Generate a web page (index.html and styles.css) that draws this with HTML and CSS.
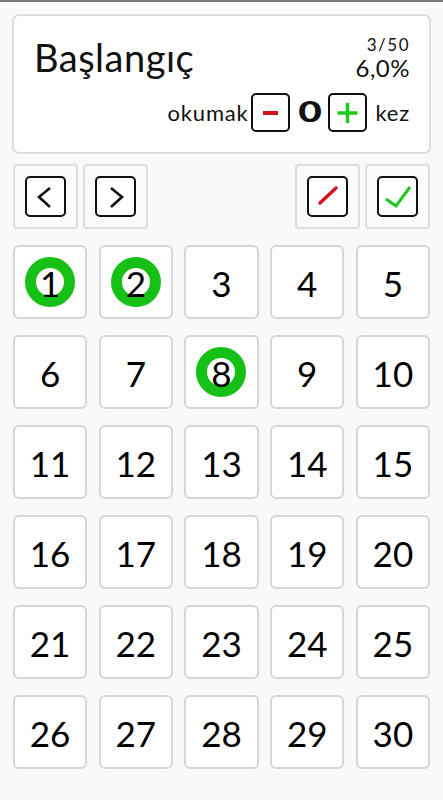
FILE: index.html
```html
<!DOCTYPE html>
<html>
<head>
    <meta charset="UTF-8">
    <meta name="viewport" content="width=device-width, initial-scale=1.0">
    <title>Başlangıç</title>
    <link rel="stylesheet" href="styles.css">
</head>
<body>
    <div class="page">
        <div class="header-card">
            <div class="header-top">
                <h1 class="title">Başlangıç</h1>
                <div class="stats">
                    <div class="stats-count">3/50</div>
                    <div class="stats-percent">6,0%</div>
                </div>
            </div>
            <div class="counter">
                <span class="counter-label">okumak</span>
                <button class="counter-btn minus">
                    <svg width="35" height="35" viewBox="0 0 35 35"><path d="M10 18h15" stroke="#d0141e" stroke-width="4"/></svg>
                </button>
                <span class="counter-value">0</span>
                <button class="counter-btn plus">
                    <svg width="35" height="35" viewBox="0 0 35 35"><path d="M7.5 18h20M17.5 8v20" stroke="#1ec81e" stroke-width="3.5"/></svg>
                </button>
                <span class="counter-label">kez</span>
            </div>
        </div>

        <div class="nav-row">
            <div class="nav-group">
                <div class="nav-cell">
                    <div class="nav-box">
                        <svg width="37" height="37" viewBox="0 0 37 37"><path d="M23 10l-11 9 11 10" fill="none" stroke="#111" stroke-width="2.6"/></svg>
                    </div>
                </div>
                <div class="nav-cell">
                    <div class="nav-box">
                        <svg width="37" height="37" viewBox="0 0 37 37"><path d="M14 10l11 9-11 10" fill="none" stroke="#111" stroke-width="2.6"/></svg>
                    </div>
                </div>
            </div>
            <div class="nav-group">
                <div class="nav-cell">
                    <div class="nav-box">
                        <svg width="37" height="37" viewBox="0 0 37 37"><path d="M11 25L27 10" fill="none" stroke="#d0141e" stroke-width="3.5" stroke-linecap="round"/></svg>
                    </div>
                </div>
                <div class="nav-cell">
                    <div class="nav-box">
                        <svg width="37" height="37" viewBox="0 0 37 37"><path d="M7 21l10 7L31 9" fill="none" stroke="#1ec81e" stroke-width="3"/></svg>
                    </div>
                </div>
            </div>
        </div>

        <div class="grid" id="grid"></div>
    </div>
    <script>
        const grid = document.getElementById("grid");
        const done = [1, 2, 8];

        for (let i = 1; i <= 30; i++) {
            const cell = document.createElement("div");
            cell.className = "cell";
            const num = document.createElement("span");
            num.className = done.includes(i) ? "num num-read" : "num";
            num.textContent = i;
            cell.appendChild(num);
            grid.appendChild(cell);
        }
    </script>
</body>
</html>
```

FILE: styles.css
```css
body {
    margin: 0;
    background-color: #f9f9f9;
    border-top: 2px solid #777;
    font-family: Lato, "DejaVu Sans", sans-serif;
    color: #111;
}

.page {
    padding: 12px 12px 0 12px;
}

.header-card {
    background: #fff;
    border: 2px solid #ddd;
    border-radius: 7px;
    height: 136px;
    padding: 0 19px 0 20px;
}

.header-top {
    display: flex;
    justify-content: space-between;
    align-items: flex-start;
    padding-top: 18px;
}

.title {
    margin: 0;
    font-size: 38px;
    font-weight: normal;
    line-height: 46px;
    letter-spacing: 0.5px;
}

.stats {
    text-align: right;
    padding-top: 2px;
}

.stats-count {
    font-size: 17px;
    line-height: 18px;
    letter-spacing: 1.5px;
}

.stats-percent {
    font-size: 24px;
    line-height: 24px;
    margin-top: 2px;
    letter-spacing: 0.5px;
}

.counter {
    display: flex;
    justify-content: flex-end;
    align-items: center;
    margin-top: 13px;
}

.counter-label {
    font-size: 22px;
    letter-spacing: 0.8px;
}

.counter-btn {
    width: 39px;
    height: 39px;
    border: 2px solid #111;
    border-radius: 5px;
    background: #fff;
    padding: 0;
    display: flex;
    align-items: center;
    justify-content: center;
}

.minus {
    margin-left: 3px;
}

.plus {
    margin-right: 8px;
}

.counter-value {
    font-size: 29px;
    font-weight: 900;
    width: 20px;
    margin: 0 8px 4px 10px;
    text-align: center;
    transform: scaleX(1.4);
}

.nav-row {
    display: flex;
    justify-content: space-between;
    margin: 10px 1px 0;
}

.nav-group {
    display: flex;
    gap: 5px;
}

.nav-cell {
    width: 61px;
    height: 61px;
    border: 2px solid #ddd;
    border-radius: 4px;
    background: #fafafa;
    display: flex;
    align-items: center;
    justify-content: center;
}

.nav-box {
    width: 37px;
    height: 37px;
    border: 2px solid #111;
    border-radius: 5px;
    background: #fff;
}

.nav-box svg {
    display: block;
}

.grid {
    display: grid;
    grid-template-columns: repeat(5, 1fr);
    gap: 16px 11.5px;
    margin: 16px 1px 0;
}

.cell {
    height: 70px;
    border: 2px solid #d6d6d6;
    border-radius: 6px;
    background: #fff;
    display: flex;
    align-items: center;
    justify-content: center;
}

.num {
    position: relative;
    z-index: 0;
    display: inline-block;
    font-size: 35px;
    padding-top: 1px;
    color: #000;
}

.num-read::before {
    content: "";
    position: absolute;
    left: 50%;
    top: 50%;
    width: 28px;
    height: 28px;
    border: 11px solid #17c017;
    border-radius: 50%;
    transform: translate(-50%, -50%);
    z-index: -1;
}
```
